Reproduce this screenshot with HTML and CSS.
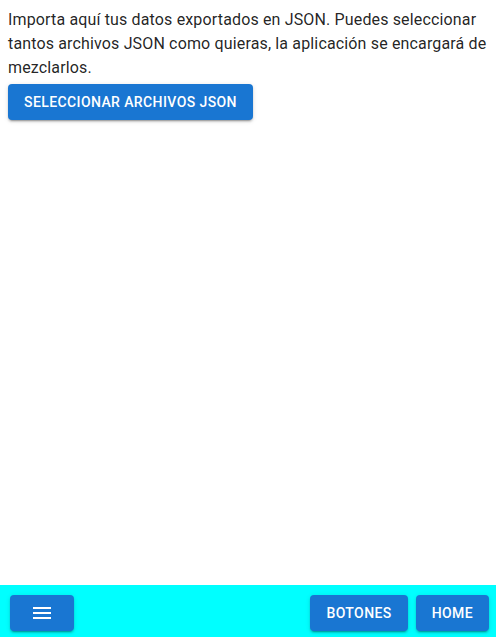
FILE: index.html
```html
<!DOCTYPE html>
<html lang="es">
<head>
<meta charset="utf-8">
<title>Importar</title>
<link rel="stylesheet" href="styles.css">
</head>
<body>
<div class="app">
  <main class="content">
    <p class="intro">Importa aquí tus datos exportados en JSON. Puedes seleccionar tantos archivos JSON como quieras, la aplicación se encargará de mezclarlos.</p>
    <button class="btn">Seleccionar archivos JSON</button>
  </main>
  <nav class="bar">
    <button class="btn btn-icon" aria-label="Menú">
      <svg viewBox="0 0 24 24" width="24" height="24"><path fill="#fff" d="M3 18h18v-2H3v2zm0-5h18v-2H3v2zm0-7v2h18V6H3z"/></svg>
    </button>
    <div class="bar-right">
      <button class="btn">Botones</button>
      <button class="btn">Home</button>
    </div>
  </nav>
</div>
</body>
</html>
```
FILE: styles.css
```css
* { box-sizing: border-box; }
html, body { margin: 0; padding: 0; }
body {
  font-family: Roboto, "Noto Sans", sans-serif;
  color: rgba(0,0,0,0.87);
  background: #fff;
}
.app {
  display: flex;
  flex-direction: column;
  height: 100vh;
}
.content {
  flex: 1;
  padding: 8px;
}
.intro {
  margin: 0 0 4px;
  font-size: 16px;
  line-height: 1.5;
  letter-spacing: 0.00938em;
}
.btn {
  display: inline-flex;
  align-items: center;
  justify-content: center;
  min-width: 64px;
  height: 36px;
  padding: 6px 16px;
  border: 0;
  border-radius: 4px;
  background: #1976d2;
  color: #fff;
  font-family: Roboto, sans-serif;
  font-weight: 500;
  font-size: 14px;
  line-height: 1.75;
  letter-spacing: 0.02857em;
  text-transform: uppercase;
  box-shadow: 0 3px 1px -2px rgba(0,0,0,0.2), 0 2px 2px 0 rgba(0,0,0,0.14), 0 1px 5px 0 rgba(0,0,0,0.12);
  cursor: pointer;
}
.btn-icon svg { display: block; }
.bar {
  height: 52px;
  background: #00ffff;
  display: flex;
  justify-content: space-between;
  align-items: flex-start;
  padding: 10px 7px 6px 10px;
}
.bar-right {
  display: flex;
  gap: 8px;
}
```
